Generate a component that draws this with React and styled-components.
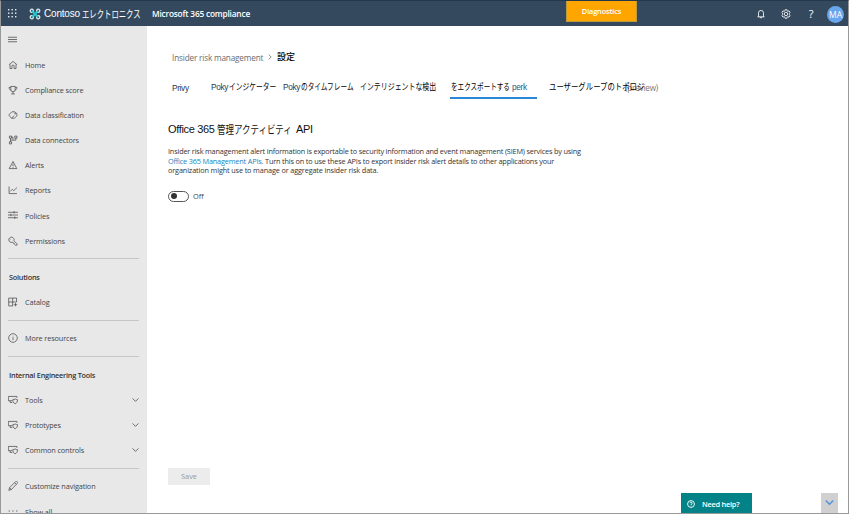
import React from 'react';
import styled, { createGlobalStyle } from 'styled-components';

const Global = createGlobalStyle`
  * { box-sizing: border-box; }
  body { margin: 0; background: #fff; overflow: hidden; font-family: "Open Sans", "Noto Sans CJK JP", sans-serif; }
  svg { display: block; flex: none; }
`;

const Window = styled.div`
  width: 849px;
  height: 514px;
  overflow: hidden;
  display: flex;
  flex-direction: column;
  position: relative;
  border: 1px solid #999;
  border-top-color: #24384b;
`;
const Header = styled.header`
  height: 25px;
  margin: 0 -1px;
  flex: none;
  display: flex;
  align-items: center;
  background: #34495e;
  color: #fff;
  padding: 0 4px 0 8px;
`;
const Brand = styled.div`
  display: flex;
  align-items: center;
  width: 144px;
  height: 25px;
`;
const BrandLatin = styled.span`
  font: 10px/14px "Liberation Sans", sans-serif;
  letter-spacing: -0.2px;
  margin-left: 3px;
  width: 38px;
  white-space: nowrap;
`;
const Kana = styled.span`
  flex: none;
  display: block;
  width: ${p => p.$w}px;
  font-family: "Noto Sans CJK JP", sans-serif;
  font-size: ${p => p.$size || 9}px;
  line-height: 14px;
  letter-spacing: 0;
  white-space: nowrap;
  transform: scaleX(${p => p.$sx});
  transform-origin: left center;
`;
const Waffle = styled.svg`
  margin-right: 12px;
`;
const Product = styled.strong`
  font-size: 8.3px;
  font-weight: 600;
  letter-spacing: -0.19px;
  white-space: nowrap;
  width: 414px;
`;
const Diagnostics = styled.button`
  width: 71px;
  height: 21px;
  margin: 0 119px 5px 0;
  border: 1px solid #b99a3d;
  border-top: 0;
  background: #ffa500;
  color: #fff;
  font: 600 7.4px/18px "Open Sans", sans-serif;
  letter-spacing: -0.15px;
  padding: 0;
`;
const HeaderTools = styled.div`
  display: flex;
  align-items: center;
  gap: 15px;
  flex: none;
`;
const Help = styled.span`
  font-size: 11px;
  width: 10px;
  text-align: center;
`;
const Avatar = styled.div`
  width: 17px;
  height: 17px;
  margin: 1px 0 0 -4px;
  border-radius: 50%;
  background: #69a5ec;
  font-size: 8.5px;
  line-height: 17px;
  text-align: center;
`;
const Body = styled.div`
  flex: 1;
  min-height: 0;
  display: flex;
`;
const Sidebar = styled.nav`
  width: 146px;
  flex: none;
  background: #e8e8e8;
  overflow: hidden;
  color: #444;
  padding: 0 8px 0 7px;
`;
const MenuButton = styled.div`
  height: 26.1px;
  display: flex;
  align-items: center;
  padding-top: 1px;
`;
const NavRow = styled.div`
  height: 25.13px;
  display: flex;
  align-items: center;
  font-size: 7.3px;
  letter-spacing: -0.12px;
  white-space: nowrap;
  & > span { flex: 1; margin-left: 7px; padding-top: 0.4px; }
`;
const NavTitle = styled.div`
  height: 25.13px;
  line-height: 26px;
  font-size: 7.3px;
  font-weight: 600;
  color: #333;
  letter-spacing: -0.23px;
  padding-left: 1px;
`;
const Divider = styled.div`
  height: 11.2px;
  padding-top: 5px;
  &::before { content: ""; display: block; height: 1px; background: #c6c6c6; }
`;
const Main = styled.main`
  flex: 1;
  display: flex;
  flex-direction: column;
  align-items: flex-start;
  padding: 24px 0 28px 21px;
`;
const Crumbs = styled.div`
  display: flex;
  align-items: center;
  height: 14px;
  margin-left: 4px;
  color: #6b6b6b;
  font-size: 8.2px;
  white-space: nowrap;
  & > svg { margin: 0 5px 0 4px; }
`;
const CrumbLink = styled.span`
  width: 92px;
  letter-spacing: -0.16px;
`;
const Current = styled.span`
  font: 500 9px/14px "Noto Sans CJK JP", sans-serif;
  color: #000;
`;
const Tabs = styled.div`
  display: flex;
  height: 23px;
  margin: 12px 0 0 4px;
`;
const Tab = styled.div`
  width: ${p => p.$w}px;
  margin-right: ${p => p.$gap || 0}px;
  height: 23px;
  padding-left: ${p => (p.$active ? 1 : 0)}px;
  border-bottom: 2px solid ${p => (p.$active ? '#2b88d8' : 'transparent')};
  display: flex;
  align-items: center;
  white-space: nowrap;
  color: #000;
`;
const Latin = styled.span`
  flex: none;
  width: 18px;
  font: 8.3px/14px "Liberation Sans", sans-serif;
  letter-spacing: -0.35px;
  padding-top: ${p => (p.$low ? 3 : 1)}px;
  color: ${p => (p.$accent ? '#245a86' : '#27374f')};
`;
const Preview = styled.span`
  margin-left: -20px;
  padding-top: 2px;
  font: 8.2px/17px "Open Sans", sans-serif;
  letter-spacing: -0.2px;
  color: #777;
`;
const Title = styled.h1`
  margin: 22px 0 0;
  height: 16px;
  display: flex;
  align-items: center;
  font-weight: 400;
  color: #111;
  white-space: nowrap;
`;
const TitleLatin = styled.span`
  flex: none;
  width: ${p => p.$w}px;
  font: 11px/16px "Liberation Sans", sans-serif;
  letter-spacing: -0.35px;
`;
const Copy = styled.div`
  margin-top: 10px;
  font-size: 7.3px;
  line-height: 9.7px;
  color: #333;
  white-space: nowrap;
`;
const Line = styled.div`
  letter-spacing: ${p => p.$ls || 0}px;
`;
const Link = styled.a`
  color: #1683c3;
`;
const ToggleRow = styled.div`
  display: flex;
  align-items: center;
  gap: 4px;
  margin-top: 14.5px;
  height: 11px;
  font-size: 7.4px;
  color: #444;
`;
const Toggle = styled.div`
  width: 21px;
  height: 11px;
  border: 1px solid #555;
  border-radius: 6px;
  padding: 1.5px 2px;
  &::before { content: ""; display: block; width: 6px; height: 6px; border-radius: 50%; background: #333; }
`;
const Save = styled.button`
  width: 42px;
  height: 17px;
  margin-top: auto;
  border: 0;
  background: #ececec;
  color: #999;
  font: 7.4px/17px "Open Sans", sans-serif;
  padding: 0;
`;
const HelpDock = styled.div`
  position: absolute;
  right: 10px;
  bottom: 0;
  display: flex;
  gap: 69px;
`;
const NeedHelp = styled.div`
  width: 71px;
  height: 20px;
  background: #038387;
  color: #fff;
  display: flex;
  align-items: center;
  gap: 7px;
  padding: 1px 0 0 6px;
  font-size: 7.4px;
  font-weight: 600;
  letter-spacing: -0.25px;
  white-space: nowrap;
`;
const Collapse = styled.div`
  width: 17px;
  height: 20px;
  background: #d0d0d0;
  color: #4d8fdc;
  display: flex;
  align-items: center;
  justify-content: center;
  & path { stroke-width: 1.2; }
`;

const paths = {
  home: <path d="M1.5 6.5 7 2l5.5 4.5M2.8 6v6h2.7V8.5a1.5 1.5 0 0 1 3 0V12h2.7V6" />,
  score: <path d="M4 2h6v4.5a3 3 0 0 1-6 0zM4 3.2H1.5c0 2.5 1 3.8 2.8 4M10 3.2h2.5c0 2.5-1 3.8-2.8 4M7 9.5v3M4.5 12.5h5" />,
  classification: <path d="m1 7 4.5-4.5h3.8L12.5 5v3.2L9 11.5H5zM5 11.5 8.8 7.8M8.7 4.5h1.5v1.7" />,
  connectors: <path d="M2 1.5h3v3H2zM2 9.5h3v3H2zM9.5 1.5h3v3h-3zM3.5 4.5v5M11 4.5v2.7H3.5M5 3h2v4" />,
  alerts: <path d="M7 2 1.7 12h10.6zM7 5.3v3.6M7 10v1" />,
  reports: <path d="M1.5 2v10h11M3 9l3-3 2 2 4.5-4.5" />,
  policies: <path d="M0 3.2h14M0 7h14M0 10.8h14M8.5 1.5v3.4M4 5.3v3.4M9.5 9.1v3.4" />,
  permissions: <path d="M8.3 6.6A3.7 3.7 0 1 0 6 8.8l1.1.1.4 1.3 1.4.2.3 1.3 1.2 1.1h2.2v-1.9L8.3 6.6M3.7 4v.8" />,
  catalog: <path d="M1 1.5h11v5.5M1 1.5v11h6M6.5 1.5v11M1 7h11M10.5 8.5V13M8.2 10.8h4.6" />,
  info: <path d="M13 7A6 6 0 1 1 1 7a6 6 0 0 1 12 0M7 6v4M7 4v.8" />,
  tools: <path d="M6 8H.5V2h12v2M3 10.5h3M10 5.5c1 .8 2 1 3.3 1 0 3-1 4.8-3.3 5.8-2.3-1-3.3-2.8-3.3-5.8 1.3 0 2.3-.2 3.3-1M3 8v2.5" />,
  edit: <path d="m1.2 13 1-3.7L10.5 1a1.6 1.6 0 0 1 2.4 2.4L4.7 12zM9.2 2.4l2.4 2.4M2.2 9.3 4.7 12" />,
  more: <path d="M1 7h1.5M6.2 7h1.5M11.5 7H13" strokeWidth="1.6" />,
  menu: <path d="M0 3.5h14M0 7h14M0 10.5h14" />,
  bell: <path d="M2 11h10M3.5 11V5.5a3.5 3.5 0 0 1 7 0V11M5.5 11c0 2 3 2 3 0" />,
  gear: <><path d="m5.8 1-.3 1.6-1.2.6-1.5-.7L1.2 5l1.2 1v2L1.2 9l1.6 2.5 1.5-.7 1.2.6.3 1.6h2.4l.3-1.6 1.2-.6 1.5.7L12.8 9l-1.2-1V6l1.2-1-1.6-2.5-1.5.7-1.2-.6L8.2 1z" /><circle cx="7" cy="7" r="2.4" /></>,
  help: <><circle cx="7" cy="7" r="6" /><path d="M5 5.5c0-2.5 4-2.5 4 0C9 7 7 7 7 8.7M7 10v1" /></>,
};
const Icon = ({ name, size = 9, weight = 1.15 }) => (
  <svg width={size} height={size} viewBox="0 0 14 14" fill="none" stroke="currentColor" strokeWidth={weight}>
    {paths[name]}
  </svg>
);
const Chevron = ({ right, width = 7 }) => (
  <svg width={right ? 4 : width} height={right ? 6 : width * 0.6} viewBox={right ? '0 0 4 7' : '0 0 8 5'} fill="none" stroke="currentColor" strokeWidth=".9">
    <path d={right ? 'M.5.7 3.4 3.5.5 6.3' : 'm.5.5 3.5 3.5L7.5.5'} />
  </svg>
);
const Logo = () => (
  <svg width="12" height="12" viewBox="0 0 12 12" fill="none">
    <g stroke="#dce8ee" strokeWidth="1.3">
      <path d="M4.5 4.3H2.3a1.6 1.6 0 1 1 2-2.1zM7.5 4.3h2.2a1.6 1.6 0 1 0-2-2.1zM4.5 7.7H2.3a1.6 1.6 0 1 0 2 2.1zM7.5 7.7h2.2a1.6 1.6 0 1 1-2 2.1z" />
    </g>
    <path d="m3 3 6 6M9 3 3 9" stroke="#28c3c7" strokeWidth="2" />
  </svg>
);

const Item = ({ icon, label, expandable }) => (
  <NavRow>
    <Icon name={icon} size={10} weight={1} />
    <span>{label}</span>
    {expandable && <Chevron width={7} />}
  </NavRow>
);

export default function App() {
  return (
    <>
      <Global />
      <Window>
        <Header>
          <Brand>
            <Waffle width="9" height="9" viewBox="0 0 9 9" fill="#e8edf2">
              {[0, 3.5, 7].map(y => [0, 3.5, 7].map(x => <rect key={`${x}-${y}`} x={x} y={y} width="1.4" height="1.4" />))}
            </Waffle>
            <Logo />
            <BrandLatin>Contoso</BrandLatin>
            <Kana $w={59} $size={10.5} $sx={0.7}>エレクトロニクス</Kana>
          </Brand>
          <Product>Microsoft 365 compliance</Product>
          <Diagnostics>Diagnostics</Diagnostics>
          <HeaderTools>
            <Icon name="bell" size={10} />
            <Icon name="gear" size={10} />
            <Help>?</Help>
            <Avatar>MA</Avatar>
          </HeaderTools>
        </Header>
        <Body>
          <Sidebar>
            <MenuButton><Icon name="menu" size={9} /></MenuButton>
            <Item icon="home" label="Home" />
            <Item icon="score" label="Compliance score" />
            <Item icon="classification" label="Data classification" />
            <Item icon="connectors" label="Data connectors" />
            <Item icon="alerts" label="Alerts" />
            <Item icon="reports" label="Reports" />
            <Item icon="policies" label="Policies" />
            <Item icon="permissions" label="Permissions" />
            <Divider />
            <NavTitle>Solutions</NavTitle>
            <Item icon="catalog" label="Catalog" />
            <Divider />
            <Item icon="info" label="More resources" />
            <Divider />
            <NavTitle>Internal Engineering Tools</NavTitle>
            <Item icon="tools" label="Tools" expandable />
            <Item icon="tools" label="Prototypes" expandable />
            <Item icon="tools" label="Common controls" expandable />
            <Divider />
            <Item icon="edit" label="Customize navigation" />
            <Item icon="more" label="Show all" />
          </Sidebar>
          <Main>
            <Crumbs>
              <CrumbLink>Insider risk management</CrumbLink>
              <Chevron right />
              <Current>設定</Current>
            </Crumbs>
            <Tabs>
              <Tab $w={39}><Latin $low>Privy</Latin></Tab>
              <Tab $w={72}><Latin>Poky</Latin><Kana $w={47} $sx={0.75}>インジケーター</Kana></Tab>
              <Tab $w={77}><Latin>Poky</Latin><Kana $w={53} $sx={0.74}>のタイムフレーム</Kana></Tab>
              <Tab $w={76} $gap={14}><Kana $w={76} $sx={0.77}>インテリジェントな検出</Kana></Tab>
              <Tab $w={87} $gap={12} $active><Kana $w={61} $sx={0.73}>をエクスポートする</Kana><Latin $accent>perk</Latin></Tab>
              <Tab $w={110}><Kana $w={96} $sx={0.82}>ユーザーグループのトポロジ</Kana><Preview>(preview)</Preview></Tab>
            </Tabs>
            <Title>
              <TitleLatin $w={49}>Office 365</TitleLatin>
              <Kana $w={79} $size={11} $sx={0.77}>管理アクティビティ</Kana>
              <TitleLatin $w={20}>API</TitleLatin>
            </Title>
            <Copy>
              <Line $ls={-0.175}>Insider risk management alert information is exportable to security information and event management (SIEM) services by using</Line>
              <Line $ls={-0.165}><Link>Office 365 Management APIs.</Link> Turn this on to use these APIs to export insider risk alert details to other applications your</Line>
              <Line $ls={-0.14}>organization might use to manage or aggregate insider risk data.</Line>
            </Copy>
            <ToggleRow><Toggle />Off</ToggleRow>
            <Save>Save</Save>
          </Main>
        </Body>
        <HelpDock>
          <NeedHelp><Icon name="help" size={8} weight={1.6} />Need help?</NeedHelp>
          <Collapse><Chevron width={9} /></Collapse>
        </HelpDock>
      </Window>
    </>
  );
}
